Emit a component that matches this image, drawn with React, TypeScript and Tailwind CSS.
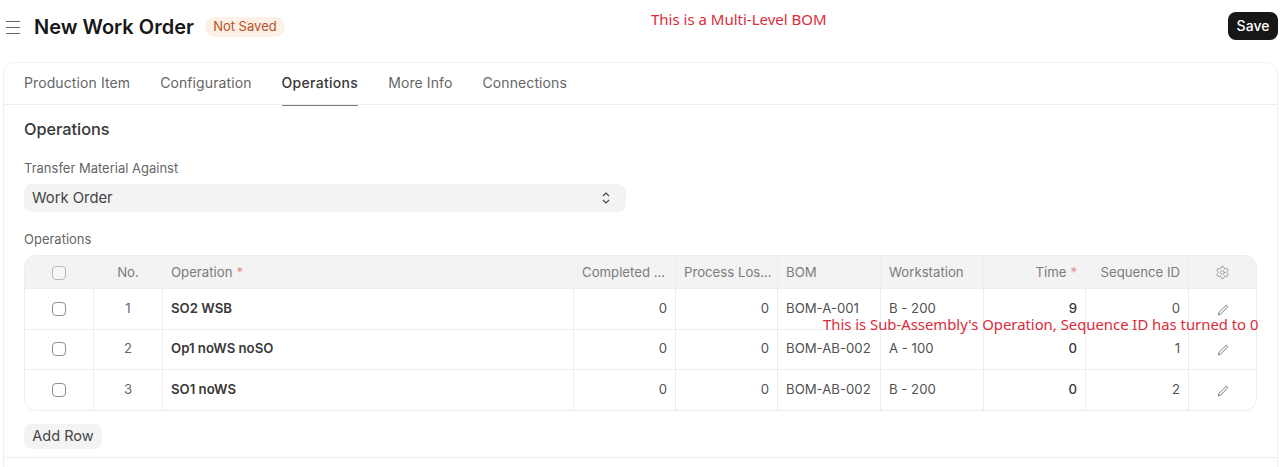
import { Settings } from 'lucide-react';

const cols = 'grid grid-cols-[69px_69px_411px_102px_102px_103px_103px_102px_103px_1fr]';

const rows = [
  { no: 1, op: 'SO2 WSB', bom: 'BOM-A-001', ws: 'B - 200', time: 9, seq: 0 },
  { no: 2, op: 'Op1 noWS noSO', bom: 'BOM-AB-002', ws: 'A - 100', time: 0, seq: 1 },
  { no: 3, op: 'SO1 noWS', bom: 'BOM-AB-002', ws: 'B - 200', time: 0, seq: 2 },
];

function Check({ head }: { head?: boolean }) {
  return <span className={`block w-[14px] h-[14px] rounded-[4px] border ${head ? 'border-[#b8b8b8] bg-[#f7f7f7]' : 'border-[#8f8f8f] bg-white'}`}></span>;
}

function Pencil() {
  return (
    <svg className="mt-[2px]" width="12" height="12" viewBox="0 0 12 12" fill="none" stroke="#666" strokeWidth="0.85" strokeLinejoin="round">
      <path d="M9.2 1.2l1.6 1.4-6.7 7.2-2.7 1.1.7-2.7z" />
    </svg>
  );
}

function Cell({ className, children }: { className?: string; children?: React.ReactNode }) {
  return <div className={`flex items-center px-2 border-r border-[#ededed] last:border-r-0 whitespace-nowrap overflow-hidden ${className ?? ''}`}>{children}</div>;
}

export default function App() {
  return (
    <div className="relative h-[467px] overflow-hidden bg-white font-['Inter',sans-serif] text-[#383838]">
      <div className="flex items-start justify-between pl-[6px] pr-[2px] pt-3 h-[62px]">
        <div className="flex items-center h-[30px]">
          <svg width="14" height="15" viewBox="0 0 14 15" stroke="#666666" strokeWidth="1">
            <path d="M0 1.5h14M0 7.5h14M0 13.5h14" />
          </svg>
          <h1 className="ml-[14px] text-[20px] font-semibold text-[#171717]">New Work Order</h1>
          <span className="ml-[11px] w-[80px] h-5 rounded-full bg-[#fdf0e6] text-[#b5532a] text-[13px] flex items-center justify-center">Not Saved</span>
        </div>
        <button className="w-[50px] h-7 rounded-lg bg-[#171717] text-white text-sm font-medium">Save</button>
      </div>

      <div className="ml-[3px] mr-[2px] h-[500px] rounded-t-xl border border-[#efefef]">
        <div className="flex gap-[30px] h-[42px] pl-5 border-b border-[#eeeeee] text-sm tracking-[0.1px] text-[#666666]">
          <span className="pt-[10px]">Production Item</span>
          <span className="pt-[10px]">Configuration</span>
          <span className="pt-[10px] h-[43px] border-b border-[#777777] font-medium tracking-[0.3px] text-[#383838]">Operations</span>
          <span className="pt-[10px]">More Info</span>
          <span className="pt-[10px]">Connections</span>
        </div>

        <div className="pl-5 pr-5">
          <h2 className="mt-[13.5px] text-[16.3px] leading-5 font-medium text-[#383838]">Operations</h2>
          <div className="mt-[20.5px] text-[13px] leading-[18px] text-[#666666]">Transfer Material Against</div>
          <div className="mt-[7px] w-[602px] h-7 rounded-lg bg-[#f3f3f3] flex items-center justify-between pl-2 pr-[15px] text-[14.8px] text-[#444444]">
            <span>Work Order</span>
            <svg width="10" height="14" viewBox="0 0 10 14" fill="none" stroke="#444" strokeWidth="1.1">
              <path d="M2 5l3-3 3 3M2 9l3 3 3-3" />
            </svg>
          </div>
          <div className="mt-[19px] text-[13px] leading-4 text-[#666666]">Operations</div>

          <div className="mt-2 w-[1233px] rounded-xl border border-[#ededed] overflow-hidden text-[13.2px]">
            <div className={`${cols} h-[32px] pt-px bg-[#f3f3f3] text-[#7c7c7c]`}>
              <Cell className="justify-center"><Check head /></Cell>
              <Cell className="justify-center">No.</Cell>
              <Cell>Operation <span className="ml-1 text-[#e58a8a]">*</span></Cell>
              <Cell>Completed ...</Cell>
              <Cell>Process Los...</Cell>
              <Cell>BOM</Cell>
              <Cell>Workstation</Cell>
              <Cell className="justify-end">Time <span className="ml-1 text-[#e58a8a]">*</span></Cell>
              <Cell className="justify-end">Sequence ID</Cell>
              <Cell className="justify-center"><Settings size={15} strokeWidth={1.1} color="#777777" /></Cell>
            </div>
            {rows.map((r) => (
              <div key={r.no} className={`${cols} h-[40.5px] border-t border-[#ededed] text-[#525252]`}>
                <Cell className="justify-center"><Check /></Cell>
                <Cell className="justify-center text-[#666666]">{r.no}</Cell>
                <Cell className="font-semibold text-[#383838]">{r.op}</Cell>
                <Cell className="justify-end">0</Cell>
                <Cell className="justify-end">0</Cell>
                <Cell>{r.bom}</Cell>
                <Cell>{r.ws}</Cell>
                <Cell className="justify-end font-medium text-[#383838]">{r.time}</Cell>
                <Cell className="justify-end">{r.seq}</Cell>
                <Cell className="justify-center"><Pencil /></Cell>
              </div>
            ))}
          </div>

          <button className="mt-[13px] w-[78px] h-[25px] rounded-lg bg-[#f3f3f3] text-[14.5px] text-[#444444] flex items-center justify-center">Add Row</button>
        </div>
        <div className="mt-2 border-t border-[#eeeeee]"></div>
      </div>

      <span className="absolute left-[651px] top-[9px] text-[15px] leading-5 text-[#dc2b3a] font-['Noto_Sans',sans-serif]">This is a Multi-Level BOM</span>
      <span className="absolute left-[823px] top-[314px] text-[14.85px] leading-5 text-[#dc2b3a] font-['Noto_Sans',sans-serif] whitespace-nowrap">This is Sub-Assembly's Operation, Sequence ID has turned to 0</span>
    </div>
  );
}
